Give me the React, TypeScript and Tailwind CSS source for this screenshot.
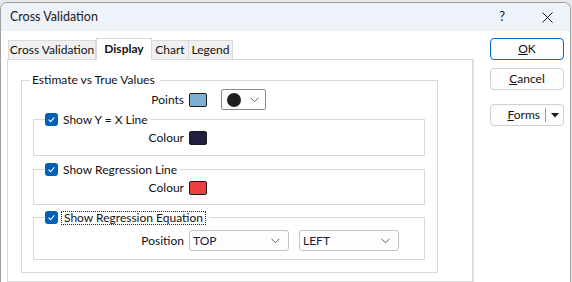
import React from "react";

const Swatch = ({ color }: { color: string }) => (
  <div className="w-[18px] h-[14px] rounded-[2px] border border-[#1b1b1b]" style={{ backgroundColor: color }} />
);

const Check = () => (
  <div className="w-[13px] h-[13px] rounded-[3px] bg-[#005fb8] flex items-center justify-center shrink-0">
    <svg width="9" height="9" viewBox="0 0 9 9">
      <path d="M1.6 4.7 L3.6 6.6 L7.4 2.4" fill="none" stroke="white" strokeWidth="1.1" />
    </svg>
  </div>
);

const Chevron = () => (
  <svg width="9" height="6" viewBox="0 0 9 6">
    <path d="M0.5 0.8 L4.5 4.8 L8.5 0.8" fill="none" stroke="#5f5f5f" strokeWidth="1" />
  </svg>
);

const Select = ({ value }: { value: string }) => (
  <div className="w-[100px] h-[21px] rounded-[3px] border border-[#c2c2c2] bg-[#fdfdfd] flex items-center pl-[3px] pr-[8px]">
    <span className="flex-1 text-[#1a1a40] leading-[14px]">{value}</span>
    <Chevron />
  </div>
);

export default function App() {
  return (
    <div className="w-[572px] h-[282px] overflow-hidden bg-[#e9e9ec] font-['Lato',sans-serif] text-[12px] text-[#111]">
      <div className="mt-[2px] w-[571px] h-[280px] rounded-t-[7px] border border-b-0 border-[#a0a0a0] bg-white flex flex-col overflow-hidden">
        {/* title bar */}
        <div className="h-[28px] bg-[#eef2f9] flex items-center pl-[9px] shrink-0">
          <span className="flex-1 text-[12.5px] text-[#1a1a1a]">Cross Validation</span>
          <span className="text-[13px] mr-[37px] text-[#1a1a1a]">?</span>
          <svg width="11" height="11" viewBox="0 0 11 11" className="mr-[17px]">
            <path d="M0.5 0.5 L10.5 10.5 M10.5 0.5 L0.5 10.5" stroke="#1a1a1a" strokeWidth="1" />
          </svg>
        </div>
        {/* body */}
        <div className="flex-1 flex min-h-0">
          {/* tab control */}
          <div className="ml-[6px] pt-[7px] flex flex-col w-[467px]">
            <div className="h-[21px] flex items-end pl-[1px]">
              <div className="w-[88px] h-[19px] border border-b-0 border-[#d9d9d9] bg-[#f0f0f0] flex items-center justify-center">Cross Validation</div>
              <div className="w-[56px] h-[22px] -mb-px relative z-10 border border-b-0 border-[#d9d9d9] bg-white flex items-center justify-center font-bold pb-[2px]">Display</div>
              <div className="w-[37px] h-[19px] border border-b-0 border-l-0 border-[#d9d9d9] bg-[#f0f0f0] flex items-center justify-center">Chart</div>
              <div className="w-[44px] h-[19px] border border-b-0 border-l-0 border-[#d9d9d9] bg-[#f0f0f0] flex items-center justify-center">Legend</div>
            </div>
            <div className="flex-1 border border-[#d9d9d9] border-r-2 border-r-[#dedede] pl-[13px] pt-[12px]">
              <fieldset className="w-[417px] border border-[#d9d9d9] pl-[11px] pb-[12px]">
                <legend className="ml-[-3px] pl-[2px] pr-[5px] leading-[16px]">Estimate vs True Values</legend>
                <div className="flex items-center h-[21px] mt-[1px]">
                  <span className="w-[151px] text-right leading-[14px]">Points</span>
                  <div className="ml-[5px]"><Swatch color="#7eafd4" /></div>
                  <div className="ml-[14px] w-[45px] h-[21px] rounded-[2px] border border-[#8a8a8a] bg-white flex items-center pl-[5px] pr-[6px]">
                    <div className="w-[14px] h-[14px] rounded-full bg-[#202020]" />
                    <div className="flex-1" />
                    <Chevron />
                  </div>
                </div>
                <fieldset className="mt-[3px] w-[392px] border border-[#d9d9d9] pb-[10px]">
                  <legend className="ml-[11px] pr-[3px] h-[13px] flex items-center">
                    <Check />
                    <span className="ml-[5px] leading-[13px]">Show Y = X Line</span>
                  </legend>
                  <div className="flex items-center h-[14px] mt-[5px]">
                    <span className="w-[150px] text-right leading-[14px]">Colour</span>
                    <div className="ml-[5px]"><Swatch color="#1f1f40" /></div>
                  </div>
                </fieldset>
                <fieldset className="mt-[7px] w-[392px] border border-[#d9d9d9] pb-[9px]">
                  <legend className="ml-[11px] pr-[3px] h-[13px] flex items-center">
                    <Check />
                    <span className="ml-[5px] leading-[13px]">Show Regression Line</span>
                  </legend>
                  <div className="flex items-center h-[14px] mt-[5px]">
                    <span className="w-[150px] text-right leading-[14px]">Colour</span>
                    <div className="ml-[5px]"><Swatch color="#ef3e3e" /></div>
                  </div>
                </fieldset>
                <fieldset className="mt-[6px] w-[392px] border border-[#d9d9d9] pb-[8px]">
                  <legend className="ml-[11px] pr-[3px] h-[13px] flex items-center">
                    <Check />
                    <span className="ml-[3px] px-[2px] leading-[12px] border border-dotted border-[#222]">Show Regression Equation</span>
                  </legend>
                  <div className="flex items-center h-[21px] mt-[6px]">
                    <span className="w-[150px] text-right leading-[14px]">Position</span>
                    <div className="ml-[5px]"><Select value="TOP" /></div>
                    <div className="ml-[10px]"><Select value="LEFT" /></div>
                  </div>
                </fieldset>
              </fieldset>
            </div>
          </div>
          {/* buttons */}
          <div className="ml-[16px] pt-[7px] flex flex-col">
            <button className="w-[74px] h-[22px] rounded-[4px] border border-[#0067c0] bg-[#fdfdfd] flex items-center justify-center">
              <span><u>O</u>K</span>
            </button>
            <button className="mt-[8px] w-[74px] h-[22px] rounded-[4px] border border-[#d0d0d0] bg-[#fdfdfd] flex items-center justify-center">
              <span><u>C</u>ancel</span>
            </button>
            <button className="mt-[14px] w-[74px] h-[22px] rounded-[4px] border border-[#d0d0d0] bg-[#fdfdfd] flex items-center">
              <span className="flex-1 text-right pr-[5px]"><u>F</u>orms</span>
              <span className="w-px h-[14px] bg-[#9a9a9a]" />
              <span className="w-[17px] flex items-center justify-center">
                <svg width="8" height="5" viewBox="0 0 8 5"><path d="M0 0 L8 0 L4 4.5 Z" fill="#1a1a1a" /></svg>
              </span>
            </button>
          </div>
        </div>
      </div>
    </div>
  );
}
